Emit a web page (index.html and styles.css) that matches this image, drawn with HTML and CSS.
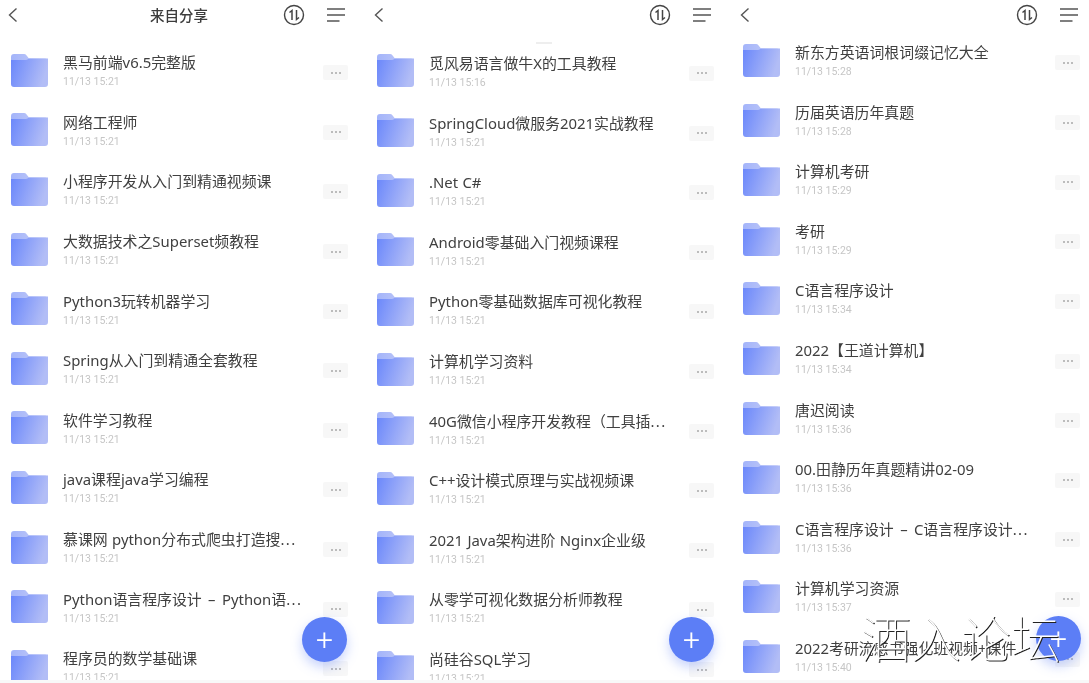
FILE: index.html
```html
<!DOCTYPE html>
<html lang="zh">
<head>
<meta charset="utf-8">
<title>来自分享</title>
<link rel="stylesheet" href="styles.css">
</head>
<body>
<svg class="defs" width="0" height="0" aria-hidden="true">
  <defs>
    <linearGradient id="fg" x1="0" y1="0" x2="1" y2="0.25">
      <stop offset="0" stop-color="#6a87fb"/>
      <stop offset="1" stop-color="#b2bdf6"/>
    </linearGradient>
    <linearGradient id="ft" x1="0" y1="0" x2="1" y2="0">
      <stop offset="0" stop-color="#a3b4fa"/>
      <stop offset="1" stop-color="#c9cff6"/>
    </linearGradient>
    <symbol id="folder" viewBox="0 0 37 33">
      <path d="M0 3a3 3 0 0 1 3-3h10a3 3 0 0 1 2.400 1.200L18 4.500h16a3 3 0 0 1 3 3V12H0z" fill="url(#ft)"/>
      <path d="M0 6h14.500q1.800 0 3-1.200L18 4.500h19V30a3 3 0 0 1-3 3H3a3 3 0 0 1-3-3z" fill="url(#fg)"/>
    </symbol>
    <symbol id="back" viewBox="0 0 12 16">
      <path d="M9.500 1.500 2.500 8l7 6.500" fill="none" stroke="#555" stroke-width="1.400"/>
    </symbol>
    <symbol id="sort" viewBox="0 0 22 22">
      <circle cx="11" cy="11" r="9.500" fill="none" stroke="#444" stroke-width="1.400"/>
      <path d="M6.500 8.500 9 6.500v9.500M13.500 6v9.500l2.500-2" fill="none" stroke="#444" stroke-width="1.500"/>
    </symbol>
    <symbol id="menu" viewBox="0 0 18 14">
      <path d="M0 1h18M0 7h18M0 13h12.500" fill="none" stroke="#555" stroke-width="1.400"/>
    </symbol>
  </defs>
</svg>
<main class="screen">
  <section class="panel panel-a">
    <header class="bar">
      <svg class="ic-back"><use href="#back"/></svg>
      <h1 class="bar-title">来自分享</h1>
      <svg class="ic-sort"><use href="#sort"/></svg>
      <svg class="ic-menu"><use href="#menu"/></svg>
    </header>
    <ul class="list">
      <li class="row"><svg class="folder"><use href="#folder"/></svg><div class="info"><p class="name">黑马前端v6.5完整版</p><p class="date">11/13 15:21</p></div><span class="more"><i></i><i></i><i></i></span></li>
      <li class="row"><svg class="folder"><use href="#folder"/></svg><div class="info"><p class="name">网络工程师</p><p class="date">11/13 15:21</p></div><span class="more"><i></i><i></i><i></i></span></li>
      <li class="row"><svg class="folder"><use href="#folder"/></svg><div class="info"><p class="name">小程序开发从入门到精通视频课</p><p class="date">11/13 15:21</p></div><span class="more"><i></i><i></i><i></i></span></li>
      <li class="row"><svg class="folder"><use href="#folder"/></svg><div class="info"><p class="name">大数据技术之Superset频教程</p><p class="date">11/13 15:21</p></div><span class="more"><i></i><i></i><i></i></span></li>
      <li class="row"><svg class="folder"><use href="#folder"/></svg><div class="info"><p class="name">Python3玩转机器学习</p><p class="date">11/13 15:21</p></div><span class="more"><i></i><i></i><i></i></span></li>
      <li class="row"><svg class="folder"><use href="#folder"/></svg><div class="info"><p class="name">Spring从入门到精通全套教程</p><p class="date">11/13 15:21</p></div><span class="more"><i></i><i></i><i></i></span></li>
      <li class="row"><svg class="folder"><use href="#folder"/></svg><div class="info"><p class="name">软件学习教程</p><p class="date">11/13 15:21</p></div><span class="more"><i></i><i></i><i></i></span></li>
      <li class="row"><svg class="folder"><use href="#folder"/></svg><div class="info"><p class="name">java课程java学习编程</p><p class="date">11/13 15:21</p></div><span class="more"><i></i><i></i><i></i></span></li>
      <li class="row"><svg class="folder"><use href="#folder"/></svg><div class="info"><p class="name">慕课网 python分布式爬虫打造搜<span class="dots">...</span></p><p class="date">11/13 15:21</p></div><span class="more"><i></i><i></i><i></i></span></li>
      <li class="row"><svg class="folder"><use href="#folder"/></svg><div class="info"><p class="name name-dash">Python语言程序设计 – Python语<span class="dots">...</span></p><p class="date">11/13 15:21</p></div><span class="more"><i></i><i></i><i></i></span></li>
      <li class="row"><svg class="folder"><use href="#folder"/></svg><div class="info"><p class="name">程序员的数学基础课</p><p class="date">11/13 15:21</p></div><span class="more"><i></i><i></i><i></i></span></li>
    </ul>
    <button class="fab" type="button">+</button>
  </section>
  <section class="panel panel-b">
    <span class="handle"></span>
    <header class="bar">
      <svg class="ic-back"><use href="#back"/></svg>
      <h1 class="bar-title"></h1>
      <svg class="ic-sort"><use href="#sort"/></svg>
      <svg class="ic-menu"><use href="#menu"/></svg>
    </header>
    <ul class="list">
      <li class="row"><svg class="folder"><use href="#folder"/></svg><div class="info"><p class="name">觅风易语言做牛X的工具教程</p><p class="date">11/13 15:16</p></div><span class="more"><i></i><i></i><i></i></span></li>
      <li class="row"><svg class="folder"><use href="#folder"/></svg><div class="info"><p class="name">SpringCloud微服务2021实战教程</p><p class="date">11/13 15:21</p></div><span class="more"><i></i><i></i><i></i></span></li>
      <li class="row"><svg class="folder"><use href="#folder"/></svg><div class="info"><p class="name">.Net C#</p><p class="date">11/13 15:21</p></div><span class="more"><i></i><i></i><i></i></span></li>
      <li class="row"><svg class="folder"><use href="#folder"/></svg><div class="info"><p class="name">Android零基础入门视频课程</p><p class="date">11/13 15:21</p></div><span class="more"><i></i><i></i><i></i></span></li>
      <li class="row"><svg class="folder"><use href="#folder"/></svg><div class="info"><p class="name">Python零基础数据库可视化教程</p><p class="date">11/13 15:21</p></div><span class="more"><i></i><i></i><i></i></span></li>
      <li class="row"><svg class="folder"><use href="#folder"/></svg><div class="info"><p class="name">计算机学习资料</p><p class="date">11/13 15:21</p></div><span class="more"><i></i><i></i><i></i></span></li>
      <li class="row"><svg class="folder"><use href="#folder"/></svg><div class="info"><p class="name">40G微信小程序开发教程（工具插<span class="dots">...</span></p><p class="date">11/13 15:21</p></div><span class="more"><i></i><i></i><i></i></span></li>
      <li class="row"><svg class="folder"><use href="#folder"/></svg><div class="info"><p class="name">C++设计模式原理与实战视频课</p><p class="date">11/13 15:21</p></div><span class="more"><i></i><i></i><i></i></span></li>
      <li class="row"><svg class="folder"><use href="#folder"/></svg><div class="info"><p class="name">2021 Java架构进阶 Nginx企业级</p><p class="date">11/13 15:21</p></div><span class="more"><i></i><i></i><i></i></span></li>
      <li class="row"><svg class="folder"><use href="#folder"/></svg><div class="info"><p class="name">从零学可视化数据分析师教程</p><p class="date">11/13 15:21</p></div><span class="more"><i></i><i></i><i></i></span></li>
      <li class="row"><svg class="folder"><use href="#folder"/></svg><div class="info"><p class="name">尚硅谷SQL学习</p><p class="date">11/13 15:21</p></div><span class="more"><i></i><i></i><i></i></span></li>
    </ul>
    <button class="fab" type="button">+</button>
  </section>
  <section class="panel panel-c">
    <header class="bar">
      <svg class="ic-back"><use href="#back"/></svg>
      <h1 class="bar-title"></h1>
      <svg class="ic-sort"><use href="#sort"/></svg>
      <svg class="ic-menu"><use href="#menu"/></svg>
    </header>
    <ul class="list">
      <li class="row"><svg class="folder"><use href="#folder"/></svg><div class="info"><p class="name">新东方英语词根词缀记忆大全</p><p class="date">11/13 15:28</p></div><span class="more"><i></i><i></i><i></i></span></li>
      <li class="row"><svg class="folder"><use href="#folder"/></svg><div class="info"><p class="name">历届英语历年真题</p><p class="date">11/13 15:28</p></div><span class="more"><i></i><i></i><i></i></span></li>
      <li class="row"><svg class="folder"><use href="#folder"/></svg><div class="info"><p class="name">计算机考研</p><p class="date">11/13 15:29</p></div><span class="more"><i></i><i></i><i></i></span></li>
      <li class="row"><svg class="folder"><use href="#folder"/></svg><div class="info"><p class="name">考研</p><p class="date">11/13 15:29</p></div><span class="more"><i></i><i></i><i></i></span></li>
      <li class="row"><svg class="folder"><use href="#folder"/></svg><div class="info"><p class="name">C语言程序设计</p><p class="date">11/13 15:34</p></div><span class="more"><i></i><i></i><i></i></span></li>
      <li class="row"><svg class="folder"><use href="#folder"/></svg><div class="info"><p class="name">2022【王道计算机】</p><p class="date">11/13 15:34</p></div><span class="more"><i></i><i></i><i></i></span></li>
      <li class="row"><svg class="folder"><use href="#folder"/></svg><div class="info"><p class="name">唐迟阅读</p><p class="date">11/13 15:36</p></div><span class="more"><i></i><i></i><i></i></span></li>
      <li class="row"><svg class="folder"><use href="#folder"/></svg><div class="info"><p class="name">00.田静历年真题精讲02-09</p><p class="date">11/13 15:36</p></div><span class="more"><i></i><i></i><i></i></span></li>
      <li class="row"><svg class="folder"><use href="#folder"/></svg><div class="info"><p class="name name-dash">C语言程序设计 – C语言程序设计<span class="dots">...</span></p><p class="date">11/13 15:36</p></div><span class="more"><i></i><i></i><i></i></span></li>
      <li class="row"><svg class="folder"><use href="#folder"/></svg><div class="info"><p class="name">计算机学习资源</p><p class="date">11/13 15:37</p></div><span class="more"><i></i><i></i><i></i></span></li>
      <li class="row"><svg class="folder"><use href="#folder"/></svg><div class="info"><p class="name">2022考研流感书强化班视频+课件</p><p class="date">11/13 15:40</p></div><span class="more"><i></i><i></i><i></i></span></li>
    </ul>
    <button class="fab" type="button">+</button>
  </section>
  <div class="strip"></div>
  <div class="watermark">酒入论坛</div>
</main>
</body>
</html>
```
FILE: styles.css
```css
* { box-sizing: border-box; }
html, body { margin: 0; padding: 0; background: #fff; }
body { width: 1089px; height: 683px; overflow: hidden; font-family: "Noto Sans", "Noto Sans CJK SC", sans-serif; }
.defs { position: absolute; }
.screen { position: relative; display: grid; grid-template-columns: 366px 366px 357px; height: 683px; overflow: hidden; }
.panel { position: relative; height: 683px; overflow: hidden; filter: blur(0.35px); }
.bar { display: flex; align-items: center; height: 30px; position: relative; z-index: 2; background: #fff; }
.ic-back { width: 12px; height: 16px; margin-left: 7px; flex: none; }
.bar-title { flex: none; width: 96px; margin: 0 0 0 112px; text-align: center; font-size: 14.500px; line-height: 30px; font-weight: 500; color: #3c3c3c; white-space: nowrap; }
.ic-sort { width: 22px; height: 22px; flex: none; margin-left: 56px; }
.ic-menu { width: 18px; height: 14px; flex: none; margin-left: 22px; }
.panel-c .ic-sort { margin-left: 57px; }
.panel-a .list { margin-top: 10.400px; }
.panel-b .list { margin-top: 11.200px; }
.panel-c .list { margin-top: 0.700px; }
.handle { position: absolute; left: 170px; top: 42px; width: 16px; height: 2px; background: #eee; }
.list { list-style: none; margin: 0; padding: 0; }
.row { display: flex; align-items: center; height: 59.620px; padding-left: 11px; }
.folder { width: 37px; height: 33px; flex: none; }
.info { width: 260px; margin-left: 15px; flex: none; padding-top: 4px; }
.panel-c .info { padding-top: 2px; }
.name { margin: 0; font-size: 14.900px; line-height: 20px; color: #404040; white-space: nowrap; word-spacing: 0.500px; }
.name-dash { word-spacing: 2.500px; }
.dots { letter-spacing: 1.400px; }
.date { margin: 0; font-size: 10.500px; line-height: 20px; color: #c6c6c6; font-family: "Roboto", "Noto Sans", sans-serif; }
.panel-c .date { line-height: 19px; }
.more { flex: none; display: flex; align-items: center; justify-content: center; gap: 2px; width: 25px; height: 15px; margin-top: 5px; background: #f7f7f7; border-radius: 2px; }
.more i { display: block; width: 2px; height: 2px; border-radius: 50%; background: #a8a8a8; }
.fab { position: absolute; left: 302px; top: 617px; width: 45px; height: 45px; border: 0; border-radius: 50%; padding: 0; background: #5c7ef6; color: #fff; font-family: "Roboto", sans-serif; font-size: 30px; line-height: 42px; font-weight: 300; box-shadow: 0 5px 12px rgba(92, 126, 246, 0.35); z-index: 3; }
.panel-b .fab { left: 303px; }
.panel-c .fab { left: 304px; top: 616px; }
.strip { position: absolute; left: 0; right: 0; bottom: 0; height: 3px; background: #f8f8f8; z-index: 4; }
.watermark { position: absolute; left: 861px; top: 601px; font-family: "Noto Sans CJK SC", sans-serif; font-size: 50px; line-height: 70px; font-weight: 100; color: #fff; text-shadow: 1px 1px 0 #222; white-space: nowrap; z-index: 5; }
```
